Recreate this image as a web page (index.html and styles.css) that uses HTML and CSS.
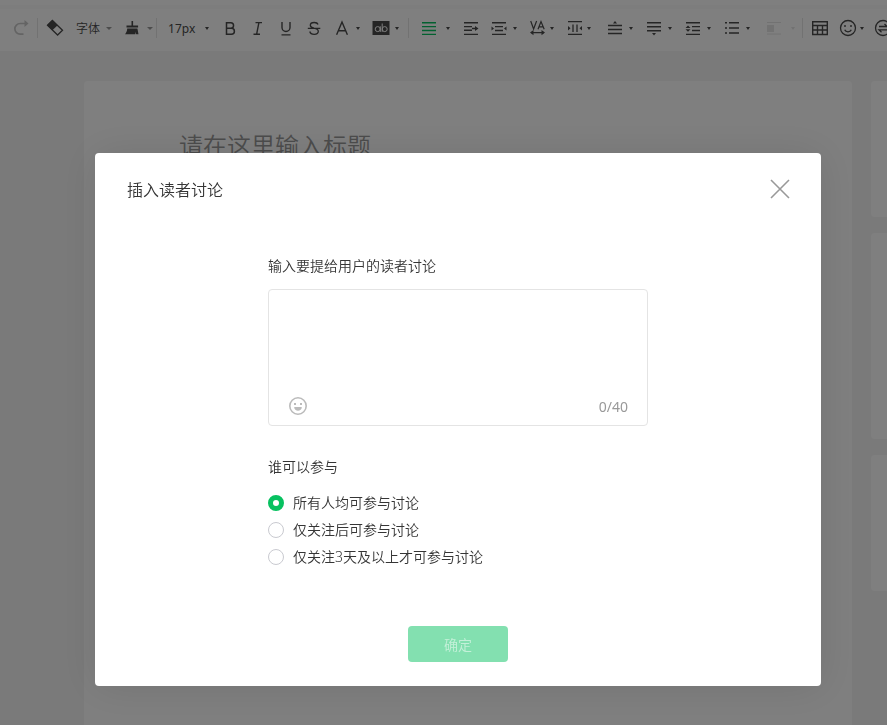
FILE: index.html
```html
<!DOCTYPE html>
<html lang="zh-CN">
<head>
  <meta charset="UTF-8">
  <meta name="viewport" content="width=device-width, initial-scale=1.0">
  <title>插入读者讨论</title>
  <link rel="stylesheet" href="styles.css">
</head>
<body>
  <header class="topbar"></header>

  <nav class="toolbar" aria-label="编辑工具">
    <button class="tool disabled" type="button" aria-label="重做">
      <svg class="icon" viewBox="0 0 18 18"><path d="M13.500 4.500H8.200a5 5 0 0 0 0 10.700h3.300" stroke-width="1.700"/><path class="fill" d="M12.500 1l4 3.500-4 3.500z"/></svg>
    </button>
    <span class="divider"></span>
    <button class="tool" type="button" aria-label="清除格式">
      <svg class="icon" viewBox="0 0 18 18"><path d="M6.400 1.500L16.500 11.300 11.600 16 1.500 6.300z" stroke-width="1.300"/><path class="fill" d="M6.400 1L11.700 6.200 6.300 11.300 1 6.300z"/></svg>
    </button>
    <button class="tool font gray" type="button">字体<span class="caret"></span></button>
    <button class="tool brush gray" type="button" aria-label="格式刷">
      <svg class="icon" viewBox="0 0 18 18"><path class="fill" d="M7.500 2h1.600v4.500h5V8.500H2.500V6.500h5zM3.200 9.500h10.200l1.100 5.800h-2.300l-.8-2.500v2.500H1c1.400-1.800 2.200-3.500 2.200-5.800z"/></svg>
      <span class="caret"></span>
    </button>
    <span class="divider near"></span>
    <button class="tool size" type="button">17px<span class="caret"></span></button>

    <div class="group">
      <button class="tool" type="button" aria-label="加粗">
        <svg class="icon" viewBox="0 0 18 18"><path d="M5.500 3.700h4.300a2.700 2.700 0 0 1 0 5.500H5.500zM5.500 9.200h4.900a3 3 0 0 1 0 6H5.500z" stroke-width="1.500"/></svg>
      </button>
      <button class="tool" type="button" aria-label="斜体">
        <svg class="icon" viewBox="0 0 18 18"><path d="M6.500 3.600h6.500M4.500 15.300h6.500M9.900 3.600L7.600 15.300" stroke-width="1.400"/></svg>
      </button>
      <button class="tool" type="button" aria-label="下划线">
        <svg class="icon" viewBox="0 0 18 18"><path d="M5 3v5.500a3.900 3.900 0 0 0 8 0V3M4.500 15.900h9" stroke-width="1.400"/></svg>
      </button>
      <button class="tool" type="button" aria-label="删除线">
        <svg class="icon" viewBox="0 0 18 18"><path d="M13 5.500C12.500 4 11 3.500 9.200 3.500 7 3.500 5.300 4.500 5.300 6.200c0 1.700 1.400 2.400 3.700 3 2.700.6 4.300 1.300 4.300 3.100 0 1.900-1.900 3-4.100 3-2.400 0-4-1-4.400-2.800M2.800 9.400h12.500" stroke-width="1.300"/></svg>
      </button>
      <button class="tool drop" type="button" aria-label="字体颜色">
        <svg class="icon" viewBox="0 0 18 18"><path d="M3.600 15.700L9 3l5.400 12.700M5.300 11.800h7.400" stroke-width="1.400"/></svg>
        <span class="caret"></span>
      </button>
      <button class="tool" type="button" aria-label="背景色">
        <svg class="icon" viewBox="0 0 18 18"><path class="fill" d="M.5 2h17v14H.5z"/><g class="light"><circle cx="5.700" cy="10.100" r="2.500"/><path d="M8.300 7.300v5.600M10.200 4.500v8.400"/><circle cx="12.700" cy="10.100" r="2.500"/></g></svg>
        <span class="caret"></span>
      </button>
    </div>
    <span class="divider far"></span>

    <div class="group">
      <button class="tool wide drop active" type="button" aria-label="两端对齐">
        <svg class="icon" viewBox="0 0 18 18"><path d="M2 3.700h14M2 7.600h14M2 11.500h14M2 15.400h14" stroke-width="1.400"/></svg>
        <span class="caret"></span>
      </button>
      <button class="tool" type="button" aria-label="首行缩进">
        <svg class="icon" viewBox="0 0 18 18"><path d="M2 3.700h14M2 7.600h8M2 11.200h8M10 9.500h4M2 15.400h14" stroke-width="1.400"/><path class="fill" d="M13 7l3.500 2.500L13 12z"/></svg>
      </button>
      <button class="tool drop" type="button" aria-label="两端缩进">
        <svg class="icon" viewBox="0 0 18 18"><path d="M2 3.700h14M5 7.600h8M5 11.500h8M2 15.400h14" stroke-width="1.400"/><path class="fill" d="M1.500 7.500l2.500 2-2.500 2zM16.500 7.500l-2.500 2 2.500 2z"/></svg>
        <span class="caret"></span>
      </button>
      <button class="tool tight drop" type="button" aria-label="字间距">
        <svg class="icon" viewBox="0 0 18 18"><path d="M1.700 2l2.900 8 3-8M9 10.300L12 2.500l3.200 7.800M10 7.800h4M2 13.600h13" stroke-width="1.200"/><path class="fill" d="M4.500 11L1 13.600l3.500 2.600zM12.500 11l3.500 2.600-3.500 2.600z"/></svg>
        <span class="caret"></span>
      </button>
      <button class="tool tight" type="button" aria-label="页边距">
        <svg class="icon" viewBox="0 0 18 18"><path d="M2 2.700h14M2 15.400h14M7 5.500v7.500M11 5.500v7.500" stroke-width="1.300"/><path class="fill" d="M2 7l2.500 2.200L2 11.400zM16 7l-2.500 2.200 2.500 2.200z"/></svg>
        <span class="caret"></span>
      </button>
    </div>

    <div class="group">
      <button class="tool drop" type="button" aria-label="段前距">
        <svg class="icon" viewBox="0 0 18 18"><path d="M2 6.400h14M2 10.400h14M2 14.400h14" stroke-width="1.500"/><path class="fill" d="M7 4.500l2-2.500 2 2.500z"/></svg>
        <span class="caret"></span>
      </button>
      <button class="tool drop" type="button" aria-label="段后距">
        <svg class="icon" viewBox="0 0 18 18"><path d="M2 3.700h14M2 7.700h14M2 11.700h14" stroke-width="1.400"/><path class="fill" d="M7 14l2 2.500 2-2.500z"/></svg>
        <span class="caret"></span>
      </button>
      <button class="tool drop" type="button" aria-label="行间距">
        <svg class="icon" viewBox="0 0 18 18"><path d="M2 3.700h14M8 7.600h8M8 11.500h8M2 15.400h14" stroke-width="1.400"/><path class="fill" d="M1.500 9l2.500-2.500L6.500 9zM1.500 10.300L4 12.800l2.500-2.500z"/></svg>
        <span class="caret"></span>
      </button>
      <button class="tool" type="button" aria-label="列表">
        <svg class="icon" viewBox="0 0 18 18"><path d="M6 3.800h10M6 8.900h10M6 14h10M2 3.800h2M2 8.900h2M2 14h2" stroke-width="1.500"/></svg>
        <span class="caret"></span>
      </button>
    </div>

    <div class="group">
      <button class="tool wide disabled faint" type="button" aria-label="图文浮动">
        <svg class="icon" viewBox="0 0 18 18"><path d="M2 3.500h14M2 15h14" stroke-width="1"/><path class="fill" d="M2 6h7v7H2z"/></svg>
        <span class="caret"></span>
      </button>
    </div>
    <span class="divider"></span>

    <button class="tool" type="button" aria-label="表格">
      <svg class="icon" viewBox="0 0 18 18"><path d="M1.700 2.700h14.600v12.800H1.700zM1.700 6.500h14.600M1.700 11h14.600M6.500 6.500v9M11.500 6.500v9" stroke-width="1.400"/></svg>
    </button>
    <button class="tool tight" type="button" aria-label="表情">
      <svg class="icon" viewBox="0 0 18 18"><circle cx="9" cy="9" r="7.500" stroke-width="1.300"/><path d="M6 6v2M12 6v2M5.700 10.800c1.200 2.700 5.400 2.700 6.600 0" stroke-width="1.400"/></svg>
      <span class="caret"></span>
    </button>
    <button class="tool" type="button" aria-label="替换">
      <svg class="icon" viewBox="0 0 18 18"><circle cx="9" cy="9" r="7.500" stroke-width="1.300"/><path d="M5 7.500h8L10.500 5M13 10.800H5l2.500 2.500" stroke-width="1.300"/></svg>
    </button>
  </nav>

  <main class="page">
    <section class="editor">
      <input class="title" type="text" placeholder="请在这里输入标题" aria-label="标题">
    </section>
    <aside class="side">
      <div class="card"></div>
      <div class="card tall"></div>
      <div class="card"></div>
    </aside>
  </main>

  <div class="mask">
    <form class="dialog" role="dialog" aria-labelledby="dialog-title">
      <div class="dialog-head">
        <h1 id="dialog-title">插入读者讨论</h1>
        <button class="close" type="button" aria-label="关闭">
          <svg viewBox="0 0 20 20"><path d="M1 1l18 18M19 1L1 19"/></svg>
        </button>
      </div>

      <div class="dialog-body">
        <label class="label" for="question">输入要提给用户的读者讨论</label>
        <div class="field">
          <textarea id="question" maxlength="40"></textarea>
          <div class="field-foot">
            <button class="emoji" type="button" aria-label="表情">
              <svg viewBox="0 0 18 18"><circle cx="9" cy="9" r="8.200"/><path class="fill" d="M5 6h2v2H5zM11 6h2v2h-2zM5.200 10h7.600c0 5-7.600 5-7.600 0z"/></svg>
            </button>
            <output class="count" for="question">0/40</output>
          </div>
        </div>

        <fieldset class="options">
          <legend class="label">谁可以参与</legend>
          <label class="option"><input type="radio" name="who" checked>所有人均可参与讨论</label>
          <label class="option"><input type="radio" name="who">仅关注后可参与讨论</label>
          <label class="option"><input type="radio" name="who">仅关注3天及以上才可参与讨论</label>
        </fieldset>
      </div>

      <div class="dialog-foot">
        <button class="submit" type="submit" disabled>确定</button>
      </div>
    </form>
  </div>
</body>
</html>
```
FILE: styles.css
```css
* {
  margin: 0;
  padding: 0;
  box-sizing: border-box;
}

body {
  display: flex;
  flex-direction: column;
  height: 100vh;
  overflow: hidden;
  background-color: #f5f5f5;
  color: #353535;
  font-family: "Noto Sans", "Noto Sans CJK SC", sans-serif;
  font-size: 14px;
  font-weight: 350;
}

button,
input,
textarea {
  border: none;
  outline: none;
  background: none;
  color: inherit;
  font: inherit;
}

/* toolbar */

.topbar {
  flex: none;
  height: 5px;
  background-color: #fff;
}

.toolbar {
  display: flex;
  align-items: center;
  flex: none;
  height: 46px;
  padding-left: 12px;
  overflow: hidden;
  background-color: #fff;
  color: #4a4a4a;
  box-shadow: inset 0 4px #fafafa;
}

.group {
  display: flex;
  flex: none;
  margin-right: 15px;
}

.group:has(+ .divider) {
  margin-right: 0;
}

.tool {
  display: flex;
  align-items: center;
  flex: none;
  gap: 5px;
  height: 24px;
  margin-right: 10px;
}

.tool.drop {
  margin-right: 12px;
}

.group .tool:last-child {
  margin-right: 0;
}

.tool.wide {
  gap: 8px;
}

.tool.tight {
  gap: 3px;
}

.tool.disabled {
  color: #c8c8c8;
  margin-right: 0;
}

.tool.faint {
  color: #e4e4e4;
}

.tool.active .icon {
  color: #07c160;
}

.tool.font {
  gap: 6px;
  margin: 0 12px 0 2px;
  font-size: 12px;
}

.tool.brush {
  margin-right: 0;
}

.tool.size {
  gap: 10px;
  margin: 0 12px 0 3px;
  font-size: 12px;
  font-weight: 400;
}

.icon {
  width: 18px;
  height: 18px;
  fill: none;
  stroke: currentColor;
}

.fill {
  fill: currentColor;
  stroke: none;
}

.light {
  stroke: #fff;
}

.caret {
  border: 2px solid transparent;
  border-top: 3px solid currentColor;
  border-bottom: none;
}

.gray .caret {
  border-width: 3px 3px 0;
  border-top-color: #999;
}

.divider {
  flex: none;
  width: 1px;
  height: 20px;
  margin: 0 8px 0 7px;
  background-color: #e4e4e4;
}

.divider.near {
  margin-left: 3px;
}

.divider.far {
  margin: 0 11px 0 9px;
}

/* page under the dialog */

.page {
  display: flex;
  flex: 1;
  gap: 19px;
  padding: 30px 0 0 84px;
}

.editor {
  flex: 1;
  padding: 46px 95px;
  border-radius: 4px 4px 0 0;
  background-color: #fff;
}

.title {
  width: 100%;
  height: 36px;
  font-size: 24px;
}

.title::placeholder {
  color: #999;
}

.side {
  display: flex;
  flex-direction: column;
  flex: 0 0 16px;
  gap: 16px;
}

.card {
  height: 136px;
  border-radius: 4px 0 0 4px;
  background-color: #fff;
}

.card.tall {
  height: 206px;
}

/* dialog */

.mask {
  position: fixed;
  inset: 0;
  display: flex;
  justify-content: center;
  align-items: flex-start;
  padding: 153px 66px 0 95px;
  background-color: rgba(0, 0, 0, .5);
}

.dialog {
  width: 100%;
  max-width: 960px;
  padding-bottom: 24px;
  border-radius: 4px;
  background-color: #fff;
  box-shadow: 0 1px 40px rgba(0, 0, 0, .1);
}

.dialog-head {
  display: flex;
  justify-content: space-between;
  align-items: center;
  height: 72px;
  padding: 0 31px 0 32px;
}

h1 {
  font-size: 16px;
  font-weight: 350;
}

.close {
  width: 20px;
  height: 20px;
}

.close svg,
.emoji svg {
  display: block;
  width: 100%;
  fill: none;
  stroke: #999;
  stroke-width: 1.6;
}

.dialog-body {
  width: 380px;
  margin: 0 auto;
  padding-top: 31px;
}

.label {
  display: block;
  line-height: 20px;
}

.field {
  height: 137px;
  margin: 13px 0 31px;
  padding: 12px 19px 9px 20px;
  border: 1px solid #e4e4e4;
  border-radius: 4px;
}

textarea {
  display: block;
  width: 100%;
  height: 94px;
  resize: none;
}

.field-foot {
  display: flex;
  justify-content: space-between;
  align-items: center;
  height: 20px;
}

.emoji {
  width: 18px;
  height: 18px;
}

.emoji svg {
  stroke: #bbb;
}

.emoji .fill {
  stroke: none;
  fill: #bbb;
}

.count {
  color: #999;
  font-weight: 400;
}

.options {
  border: none;
}

.options .label {
  margin-bottom: 12px;
}

.option {
  display: flex;
  align-items: center;
  gap: 9px;
  height: 27px;
  line-height: 18px;
}

.option input {
  appearance: none;
  width: 16px;
  height: 16px;
  border: 1px solid #c9cad0;
  border-radius: 50%;
}

.option input:checked {
  border: 5px solid #07c160;
}

.dialog-foot {
  display: flex;
  justify-content: center;
  padding-top: 56px;
}

.submit {
  width: 100px;
  height: 36px;
  border-radius: 4px;
  background-color: #83e0b0;
  color: #c4f0d9;
}
```
